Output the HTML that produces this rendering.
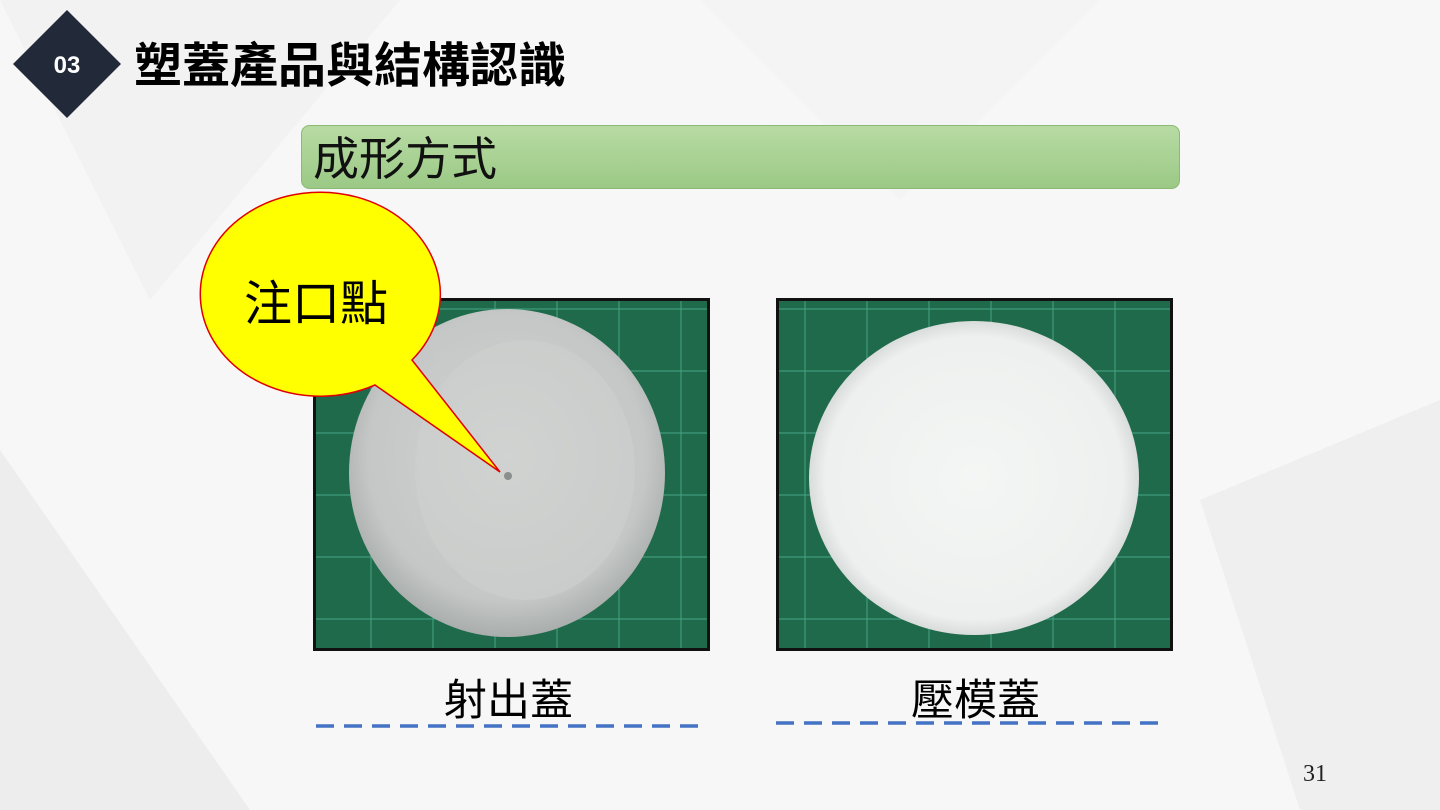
<!DOCTYPE html>
<html><head><meta charset="utf-8"><style>
body{margin:0;width:1440px;height:810px;overflow:hidden;background:#f4f4f4;font-family:"Liberation Sans","Noto Sans CJK TC",sans-serif;position:relative}
.abs{position:absolute;line-height:1}
</style></head><body>
<svg class="abs" style="left:0;top:0" width="1440" height="810">
<defs>
<linearGradient id="gb" x1="0" y1="0" x2="0" y2="1"><stop offset="0" stop-color="#b8dba4"/><stop offset="1" stop-color="#9bc985"/></linearGradient>
<radialGradient id="d1" cx="0.5" cy="0.45" r="0.55"><stop offset="0" stop-color="#d2d4d3"/><stop offset="0.8" stop-color="#c4c7c6"/><stop offset="1" stop-color="#a9adac"/></radialGradient>
<radialGradient id="d2" cx="0.5" cy="0.5" r="0.5"><stop offset="0" stop-color="#f4f6f5"/><stop offset="0.9" stop-color="#eef0ef"/><stop offset="1" stop-color="#d8dcda"/></radialGradient>
<pattern id="grid" width="62" height="62" patternUnits="userSpaceOnUse"><rect width="62" height="62" fill="#1f6a4b"/><path d="M61 0V62M0 61H62" stroke="#3f9a7d" stroke-width="1.2"/></pattern>
</defs>
<polygon points="0,0 400,0 150,300" fill="#ececec"/>
<polygon points="0,450 250,810 0,810" fill="#e6e6e6"/>
<polygon points="1200,500 1440,400 1440,810 1300,810" fill="#e8e8e8"/>
<polygon points="700,0 1100,0 900,200" fill="#efefef"/>
<rect x="0" y="0" width="1440" height="810" fill="#fff" opacity="0.3"/>
<polygon points="67,10 121,64 67,118 13,64" fill="#222a3a"/>
<text x="67" y="73" font-size="24" font-weight="bold" fill="#fff" text-anchor="middle" font-family="Liberation Sans Narrow,Liberation Sans,sans-serif">03</text>
<rect x="301.5" y="125.5" width="878" height="63" rx="8" fill="url(#gb)" stroke="#8cba72"/>
<rect x="313" y="298" width="397" height="353" fill="#111"/>
<rect x="316" y="301" width="391" height="347" fill="url(#grid)"/>
<ellipse cx="507" cy="473" rx="158" ry="164" fill="url(#d1)"/>
<ellipse cx="525" cy="470" rx="110" ry="130" fill="#cfd1d0" opacity="0.5"/>
<circle cx="508" cy="476" r="4" fill="#8a8e8d"/>
<rect x="776" y="298" width="397" height="353" fill="#111"/>
<rect x="779" y="301" width="391" height="347" fill="url(#grid)"/>
<ellipse cx="974" cy="478" rx="165" ry="157" fill="url(#d2)"/>
<path d="M412 360 L500 472 L375 385 A120 102 0 1 1 412 360 Z" fill="#ffff00" stroke="#e00000" stroke-width="1.5"/>
<path d="M316 726H708" stroke="#4472c4" stroke-width="3.5" stroke-dasharray="18 10"/>
<path d="M776 723H1166" stroke="#4472c4" stroke-width="3.5" stroke-dasharray="18 10"/>
</svg>
<div class="abs" style="left:134px;top:43px;font-size:48px;font-weight:bold;color:#000">塑蓋產品與結構認識</div>
<div class="abs" style="left:313px;top:136px;font-size:46px;color:#111">成形方式</div>
<div class="abs" style="left:244px;top:281px;font-size:48px;color:#000">注口點</div>
<div class="abs" style="left:444px;top:680px;font-size:43px;color:#000">射出蓋</div>
<div class="abs" style="left:911px;top:680px;font-size:43px;color:#000">壓模蓋</div>
<div class="abs" style="left:1303px;top:762px;font-size:24px;color:#222;font-family:'Liberation Serif',serif">31</div>
</body></html>
